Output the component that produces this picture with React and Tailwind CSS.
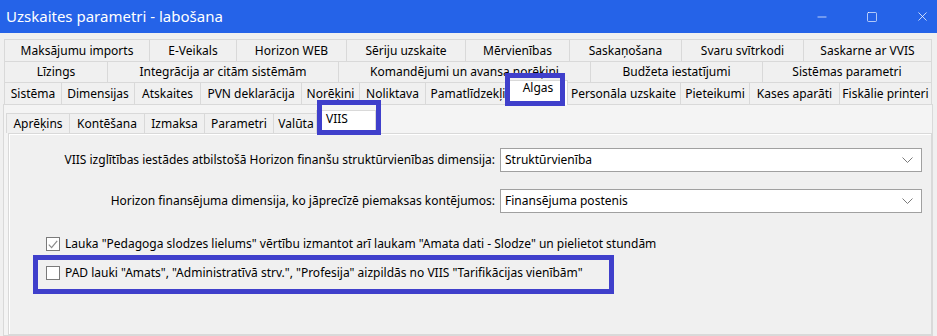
import { Minus, Square, X } from 'lucide-react'

const row1 = [
  ['Maksājumu imports', 'w-[145px]'],
  ['E-Veikals', 'w-[87px]'],
  ['Horizon WEB', 'w-[110px]'],
  ['Sēriju uzskaite', 'w-[119px]'],
  ['Mērvienības', 'w-[104px]'],
  ['Saskaņošana', 'w-[112px]'],
  ['Svaru svītrkodi', 'w-[122px]'],
  ['Saskarne ar VVIS', 'w-[129px]'],
]

const row2 = [
  ['Līzings', 'w-[103px]'],
  ['Integrācija ar citām sistēmām', 'w-[231px]'],
  ['Komandējumi un avansa norēķini', 'w-[252px]'],
  ['Budžeta iestatījumi', 'w-[172px]'],
  ['Sistēmas parametri', 'w-[170px]'],
]

const row3 = [
  ['Sistēma', 'w-[57px]'],
  ['Dimensijas', 'w-[73px]'],
  ['Atskaites', 'w-[66px]'],
  ['PVN deklarācija', 'w-[101px]'],
  ['Norēķini', 'w-[58px]'],
  ['Noliktava', 'w-[66px]'],
  ['Pamatlīdzekļi', 'w-[85px]'],
  ['Algas', 'w-[60px]', true],
  ['Personāla uzskaite', 'w-[114px]'],
  ['Pieteikumi', 'w-[69px]'],
  ['Kases aparāti', 'w-[90px]'],
  ['Fiskālie printeri', 'w-[93px]'],
]

const subTabs = [
  ['Aprēķins', 'w-[63px]'],
  ['Kontēšana', 'w-[75px]'],
  ['Izmaksa', 'w-[60px]'],
  ['Parametri', 'w-[69px]'],
  ['Valūta', 'w-[45px]'],
  ['VIIS', 'w-[60px]', true],
]

function TabRow({ tabs, height }) {
  return (
    <div className={`flex ${height}`}>
      {tabs.map(([label, w, active]) =>
        active ? (
          <div
            key={label}
            className={`${w} -mx-[2px] -mt-[2px] h-[calc(100%+3px)] relative z-10 bg-white border border-b-0 border-[#d9d9d9] flex items-start justify-center pt-[1px] shrink-0`}
          >
            {label}
          </div>
        ) : (
          <div
            key={label}
            className={`${w} border-t border-l last:border-r border-[#d9d9d9] bg-[#f0f0f0] flex items-center justify-center whitespace-nowrap overflow-hidden shrink-0`}
          >
            {label}
          </div>
        )
      )}
    </div>
  )
}

function SubTabRow() {
  return (
    <div className="flex h-[20px] ml-[2px]">
      {subTabs.map(([label, w, active]) =>
        active ? (
          <div
            key={label}
            className={`${w} -ml-[2px] -mt-[3px] h-[24px] relative z-10 bg-white border border-b-0 border-[#d9d9d9] flex items-start justify-start pl-[9px] pt-[2px] shrink-0`}
          >
            {label}
          </div>
        ) : (
          <div
            key={label}
            className={`${w} border-t border-l border-[#d9d9d9] bg-[#f0f0f0] flex items-center justify-center whitespace-nowrap shrink-0`}
          >
            {label}
          </div>
        )
      )}
    </div>
  )
}

function Select({ value }) {
  return (
    <div className="ml-[5px] w-[422px] h-[24px] bg-white border border-[#a0a0a0] flex items-center justify-between pl-[4px] pr-[8px]">
      <span>{value}</span>
      <svg width="11" height="6" viewBox="0 0 11 6" fill="none">
        <path d="M0.5 0.5 L5.5 5.5 L10.5 0.5" stroke="#7a7a7a" strokeWidth="1" />
      </svg>
    </div>
  )
}

function Checkbox({ checked }) {
  return (
    <div className="w-[14px] h-[14px] border border-[#7a7a7a] bg-white flex items-center justify-center shrink-0">
      {checked && (
        <svg width="10" height="9" viewBox="0 0 10 9" fill="none">
          <path d="M0.8 4.6 L3.6 7.6 L9.2 0.8" stroke="#8a8a8a" strokeWidth="1.2" />
        </svg>
      )}
    </div>
  )
}

export default function App() {
  return (
    <div className="relative w-[937px] h-[336px] overflow-hidden bg-[#f0f0f0] text-[12px] text-black font-['Segoe_UI','Noto_Sans',sans-serif] leading-none flex flex-col">
      {/* title bar */}
      <div className="h-[33px] bg-[#2563e8] text-white flex items-center justify-between shrink-0">
        <span className="pl-[6px] text-[15px]">Uzskaites parametri - labošana</span>
        <div className="flex items-center gap-[34px] pr-[7px]">
          <div className="w-[16px] flex justify-center"><Minus size={14} strokeWidth={1.2} /></div>
          <div className="w-[16px] flex justify-center"><Square size={12} strokeWidth={1.3} /></div>
          <div className="w-[16px] flex justify-center"><X size={15} strokeWidth={1.2} /></div>
        </div>
      </div>

      {/* main tab strip */}
      <div className="pt-[6px] pl-[4px]">
        <TabRow tabs={row1} height="h-[22px]" />
        <TabRow tabs={row2} height="h-[21px]" />
        <TabRow tabs={row3} height="h-[22px]" />
      </div>

      {/* Algas page */}
      <div className="ml-[3px] w-[930px] flex-1 border border-[#d9d9d9] bg-[#f4f4f4] flex flex-col pt-[8px]">
        <SubTabRow />
        <div className="ml-[4px] flex-1 border border-[#d9d9d9] bg-[#f0f0f0] shadow-[inset_1px_1px_0_#ffffff] flex flex-col pt-[14px]">
          <div className="flex items-center h-[24px]">
            <div className="w-[486px] text-right whitespace-nowrap">
              VIIS izglītības iestādes atbilstošā Horizon finanšu struktūrvienības dimensija:
            </div>
            <Select value="Struktūrvienība" />
          </div>
          <div className="flex items-center h-[24px] mt-[17px]">
            <div className="w-[486px] text-right whitespace-nowrap">
              Horizon finansējuma dimensija, ko jāprecīzē piemaksas kontējumos:
            </div>
            <Select value="Finansējuma postenis" />
          </div>

          <div className="flex items-center gap-[5px] pl-[37px] mt-[24px] h-[14px]">
            <Checkbox checked />
            <span className="whitespace-nowrap">
              Lauka "Pedagoga slodzes lielums" vērtību izmantot arī laukam "Amata dati - Slodze" un pielietot stundām
            </span>
          </div>
          <div className="flex items-center gap-[5px] pl-[37px] mt-[15px] h-[14px]">
            <Checkbox />
            <span className="whitespace-nowrap">
              PAD lauki "Amats", "Administratīvā strv.", "Profesija" aizpildās no VIIS "Tarifikācijas vienībām"
            </span>
          </div>
        </div>
      </div>

      {/* annotation boxes */}
      <div className="absolute left-[505px] top-[73px] w-[60px] h-[33px] border-[5px] border-[#3f3fcb] z-20" />
      <div className="absolute left-[317px] top-[100px] w-[64px] h-[35px] border-[5px] border-[#3f3fcb] z-20" />
      <div className="absolute left-[33px] top-[255px] w-[581px] h-[39px] border-[5px] border-[#3f3fcb] z-20" />
    </div>
  )
}
